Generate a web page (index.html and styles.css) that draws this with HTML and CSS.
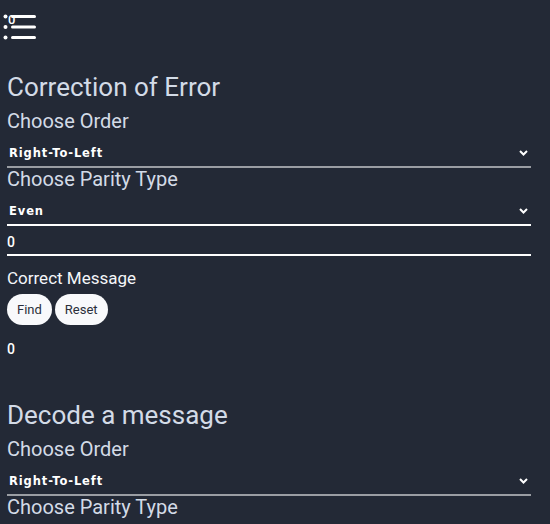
FILE: index.html
```html
<!DOCTYPE html>
<html lang="en">
<head>
<meta charset="utf-8">
<title>Hamming Code</title>
<link rel="stylesheet" href="styles.css">
</head>
<body>
<header class="topbar">
  <button class="menu-btn" aria-label="Menu">
    <svg width="36" height="30" viewBox="0 0 36 30">
      <g fill="#ffffff">
        <circle cx="4.5" cy="4.5" r="2"/>
        <circle cx="4.5" cy="15" r="2"/>
        <circle cx="4.5" cy="25.5" r="2"/>
        <rect x="10" y="3" width="25" height="3" rx="1.5"/>
        <rect x="10" y="13.5" width="25" height="3" rx="1.5"/>
        <rect x="10" y="24" width="25" height="3" rx="1.5"/>
      </g>
    </svg>
    <span class="badge">0</span>
  </button>
</header>
<main class="content">
  <section class="panel">
    <h2 class="title">Correction of Error</h2>
    <h3 class="label">Choose Order</h3>
    <div class="select select-muted">
      <span>Right-To-Left</span>
      <svg class="chev" width="9" height="6" viewBox="0 0 9 6"><path d="M1 1l3.5 3.5L8 1" stroke="#fff" stroke-width="2" fill="none"/></svg>
    </div>
    <h3 class="label label-tight">Choose Parity Type</h3>
    <div class="select">
      <span>Even</span>
      <svg class="chev" width="9" height="6" viewBox="0 0 9 6"><path d="M1 1l3.5 3.5L8 1" stroke="#fff" stroke-width="2" fill="none"/></svg>
    </div>
    <div class="field">0</div>
    <h4 class="sub">Correct Message</h4>
    <div class="actions">
      <button class="pill">Find</button>
      <button class="pill">Reset</button>
    </div>
    <p class="result">0</p>
  </section>
  <section class="panel panel-second">
    <h2 class="title">Decode a message</h2>
    <h3 class="label">Choose Order</h3>
    <div class="select select-muted">
      <span>Right-To-Left</span>
      <svg class="chev" width="9" height="6" viewBox="0 0 9 6"><path d="M1 1l3.5 3.5L8 1" stroke="#fff" stroke-width="2" fill="none"/></svg>
    </div>
    <h3 class="label label-tight">Choose Parity Type</h3>
  </section>
</main>
</body>
</html>
```
FILE: styles.css
```css
html, body {
  margin: 0;
  padding: 0;
  background: #232936;
  overflow: hidden;
}
body {
  font-family: Roboto, "Open Sans", sans-serif;
  color: #ffffff;
}
.topbar {
  height: 50px;
  padding: 12px 0 0 1px;
  box-sizing: border-box;
}
.menu-btn {
  position: relative;
  display: block;
  padding: 0;
  margin: 0;
  border: 0;
  background: none;
  width: 36px;
  height: 30px;
}
.menu-btn svg { display: block; }
.badge {
  position: absolute;
  left: 7px;
  top: 2px;
  font-family: Roboto, sans-serif;
  font-size: 13px;
  font-weight: 500;
  line-height: 12px;
  color: #ffffff;
}
.content {
  width: 524px;
  margin-left: 7px;
}
.title {
  margin: 22px 0 0;
  font-size: 26px;
  font-weight: 400;
  line-height: 30px;
  color: #d3dbe7;
}
.label {
  margin: 8px 0 0;
  font-size: 20px;
  font-weight: 400;
  line-height: 22px;
  color: #d3dbe7;
}
.label-tight { margin-top: 0; }
.select {
  display: flex;
  align-items: center;
  justify-content: space-between;
  height: 36px;
  padding: 8px 3px 0 2px;
  border-bottom: 2px solid #ffffff;
  box-sizing: border-box;
  font-family: "DejaVu Sans", sans-serif;
  font-size: 11.5px;
  font-weight: bold;
  letter-spacing: 0.9px;
}
.select-muted { border-bottom-color: #9a9da3; }
.chev { display: block; }
.field {
  height: 30px;
  border-bottom: 2px solid #ffffff;
  box-sizing: border-box;
  font-family: Roboto, sans-serif;
  font-size: 14px;
  font-weight: 500;
  line-height: 14px;
  padding-top: 9px;
}
.sub {
  margin: 12px 0 0;
  font-size: 17px;
  font-weight: 400;
  line-height: 20px;
  color: #f4f6f9;
}
.actions {
  display: flex;
  gap: 3px;
  margin-top: 6px;
}
.pill {
  height: 31px;
  padding: 0 10px;
  border: 0;
  border-radius: 16px;
  background: #f8f9fb;
  color: #2a2f3a;
  font-family: Roboto, sans-serif;
  font-size: 13px;
}
.result {
  margin: 17px 0 0;
  font-family: Roboto, sans-serif;
  font-size: 14px;
  font-weight: 500;
  line-height: 14px;
}
.panel-second { margin-top: 44px; }
```
